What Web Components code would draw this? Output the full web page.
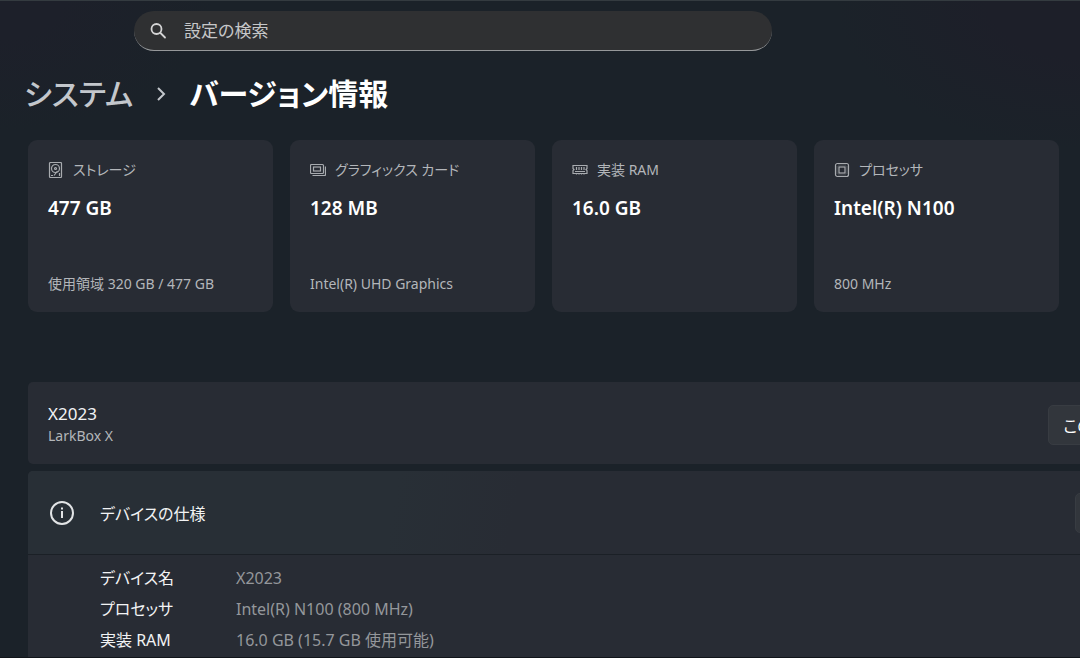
<!DOCTYPE html>
<html lang="ja">
<head>
<meta charset="utf-8">
<meta name="viewport" content="width=device-width, initial-scale=1">
<title>バージョン情報</title>
<style>
html, body {
  margin: 0;
  min-height: 100%;
}
body {
  --page: #1b2229;
  --surface: #282c34;
  --text: #f2f3f4;
  --text-soft: #b3b6ba;
  --text-dim: #94979b;
  background: var(--page);
  color: var(--text);
  font-family: "Noto Sans", "Noto Sans CJK JP", sans-serif;
  font-feature-settings: "palt";
}
</style>
</head>
<body>
<settings-window>
  <search-box slot="search" label="設定の検索"></search-box>
  <bread-crumb slot="title" parent="システム">バージョン情報</bread-crumb>
  <spec-card icon="disk">
    <span slot="label">ストレージ</span>
    477 GB
    <span slot="note">使用領域 320 GB / 477 GB</span>
  </spec-card>
  <spec-card icon="graphics">
    <span slot="label">グラフィックス カード</span>
    128 MB
    <span slot="note">Intel(R) UHD Graphics</span>
  </spec-card>
  <spec-card icon="memory">
    <span slot="label">実装 RAM</span>
    16.0 GB
  </spec-card>
  <spec-card icon="chip">
    <span slot="label">プロセッサ</span>
    Intel(R) N100
    <span slot="note">800 MHz</span>
  </spec-card>
  <device-panel slot="panels" model="LarkBox X">
    X2023
    <push-button slot="action">この PC の名前を変更</push-button>
  </device-panel>
  <detail-panel slot="panels">
    デバイスの仕様
    <push-button slot="action">コピー</push-button>
    <spec-row slot="rows" name="デバイス名">X2023</spec-row>
    <spec-row slot="rows" name="プロセッサ">Intel(R) N100 (800 MHz)</spec-row>
    <spec-row slot="rows" name="実装 RAM">16.0 GB (15.7 GB 使用可能)</spec-row>
  </detail-panel>
</settings-window>

<script>
(function () {
  const icons = {
    disk: `<rect x="1.5" y="0.5" width="12" height="15" rx="1"/>
      <circle cx="7.5" cy="6.5" r="4"/><circle cx="7.5" cy="6.5" r="1"/>
      <path d="M6 13.500 9.500 9M3 13.500h2M11.500 11v3"/>`,
    graphics: `<rect x="0.500" y="2.500" width="13" height="9" rx="1"/>
      <rect x="3.500" y="5" width="7" height="4"/>
      <path d="M2.500 13.500h12a1 1 0 0 0 1-1V4.500"/>`,
    memory: `<path d="M1 3.500h14v3l-1 1 1 1v3h-14v-3l1-1-1-1z"/>
      <path d="M4.500 5v3M7 5v3M9.500 5v3M12 5v3M3 9.500h10M4.500 11.500v1M7 11.500v1M9.500 11.500v1M12 11.500v1"/>`,
    chip: `<rect x="1.500" y="1.500" width="13" height="13" rx="2"/>
      <rect x="5" y="5" width="6" height="6"/>
      <path d="M4 3h8M4 13h8M3 4v8M13 4v8" stroke-opacity=".3"/>`
  };

  function define(name, html, setup) {
    const template = document.createElement("template");
    template.innerHTML = html;
    customElements.define(name, class extends HTMLElement {
      constructor() {
        super();
        this.attachShadow({mode: "open"});
        this.shadowRoot.appendChild(template.content.cloneNode(true));
      }

      connectedCallback() {
        if (setup)
          setup(this, this.shadowRoot);
      }
    });
  }

  define("settings-window", `
<style>
:host {
  display: block;
  box-sizing: border-box;
  min-height: 100vh;
  overflow: hidden;
  padding: 10px 21px 0 28px;
  border-top: 1px solid #343b40;
  border-bottom: 1px solid #11151a;
  background:
    radial-gradient(ellipse at 100% 0, #1d1f29 0 6%, transparent 16%),
    radial-gradient(ellipse at 0 0, #1d202a 0 4%, transparent 14%),
    var(--page);
}
header {
  padding-left: 106px;
}
.cards {
  display: grid;
  grid-template-columns: repeat(4, 1fr);
  gap: 17px;
  margin-top: 22px;
}
/* the lower panels run on past the right edge of the window */
.panels {
  display: flex;
  flex-direction: column;
  gap: 7px;
  margin: 70px -191px 0 0;
}
</style>
<header><slot name="search"></slot></header>
<main>
  <slot name="title"></slot>
  <section class="cards"><slot></slot></section>
  <section class="panels"><slot name="panels"></slot></section>
</main>`);

  define("search-box", `
<style>
:host {
  display: block;
  width: 69%;
}
label {
  display: flex;
  align-items: center;
  gap: 17px;
  box-sizing: border-box;
  height: 40px;
  padding: 0 16px;
  border-bottom: 1px solid #96989a;
  border-radius: 20px;
  background: #2f3032;
}
svg {
  flex: none;
  width: 17px;
  height: 17px;
  fill: none;
  stroke: #d4d4d5;
  stroke-width: 1.8;
  stroke-linecap: round;
}
input {
  flex: 1;
  min-width: 0;
  padding: 0;
  border: 0;
  outline: 0;
  background: none;
  color: inherit;
  font: inherit;
  font-size: 17px;
}
input::placeholder {
  color: #c6c7c8;
  opacity: 1;
}
</style>
<label>
  <svg viewBox="0 0 17 17" aria-hidden="true"><circle cx="6.500" cy="7" r="5"/><path d="m10.500 11 4.500 4.500"/></svg>
  <input type="search">
</label>`, function (host, root) {
    const input = root.querySelector("input");
    input.placeholder = host.getAttribute("label");
    input.setAttribute("aria-label", host.getAttribute("label"));
  });

  define("bread-crumb", `
<style>
:host {
  display: block;
  margin: 19px 0 0 -4px;
}
nav {
  display: flex;
  align-items: center;
  gap: 22px;
  font-size: 30px;
  line-height: 48px;
  white-space: nowrap;
}
a {
  color: #c3c7cc;
  font-weight: 500;
  text-decoration: none;
}
h1 {
  margin: 0;
  color: #fff;
  font-size: inherit;
  font-weight: 700;
}
svg {
  width: 12px;
  height: 16px;
  fill: none;
  stroke: #c3c7cc;
  stroke-width: 2;
}
</style>
<nav>
  <a href="#system"></a>
  <svg viewBox="0 0 12 16" aria-hidden="true"><path d="m3 2 6 6-6 6"/></svg>
  <h1><slot></slot></h1>
</nav>`, function (host, root) {
    root.querySelector("a").textContent = host.getAttribute("parent");
  });

  define("spec-card", `
<style>
:host {
  display: flex;
  flex-direction: column;
  box-sizing: border-box;
  min-height: 172px;
  padding: 18px 20px 16px;
  border-radius: 9px;
  background: var(--surface);
  color: var(--text-soft);
  font-size: 14px;
  line-height: 24px;
}
.label {
  display: flex;
  align-items: center;
  gap: 9px;
}
svg {
  width: 16px;
  height: 16px;
  fill: none;
  stroke: #a8abaf;
  stroke-width: 1.2;
}
.value {
  margin-top: 12px;
  color: #fff;
  font-size: 19px;
  font-weight: 600;
  line-height: 28px;
}
.note {
  margin-top: auto;
}
</style>
<div class="label"><svg viewBox="0 0 16 16" aria-hidden="true"></svg><slot name="label"></slot></div>
<div class="value"><slot></slot></div>
<div class="note"><slot name="note"></slot></div>`, function (host, root) {
    root.querySelector("svg").innerHTML = icons[host.getAttribute("icon")];
  });

  define("push-button", `
<style>
:host {
  display: block;
}
button {
  height: 40px;
  padding: 0 14px;
  border: 1px solid #383c42;
  border-radius: 5px;
  background: #32363c;
  color: #fff;
  font: inherit;
  font-size: 16px;
  white-space: nowrap;
}
</style>
<button type="button"><slot></slot></button>`);

  define("device-panel", `
<style>
:host {
  display: flex;
  align-items: center;
  justify-content: space-between;
  box-sizing: border-box;
  min-height: 82px;
  padding: 3px 20px 0;
  border-radius: 5px;
  background: var(--surface);
}
.name {
  font-size: 17px;
  line-height: 22px;
}
.model {
  color: var(--text-soft);
  font-size: 14px;
  line-height: 22px;
}
</style>
<div>
  <div class="name"><slot></slot></div>
  <div class="model"></div>
</div>
<slot name="action"></slot>`, function (host, root) {
    root.querySelector(".model").textContent = host.getAttribute("model");
  });

  define("detail-panel", `
<style>
:host {
  display: block;
  border-radius: 5px 5px 0 0;
  background: var(--surface);
}
header {
  display: flex;
  align-items: center;
  box-sizing: border-box;
  min-height: 84px;
  padding: 0 20px;
  border-bottom: 1px solid #1b2026;
  border-radius: 5px 5px 0 0;
  background: linear-gradient(100deg, #282f36 0 30%, transparent 40%);
}
svg {
  width: 28px;
  height: 28px;
  fill: none;
  stroke: #e2e4e6;
  stroke-width: 2;
}
h2 {
  flex: 1;
  margin: 0 0 0 24px;
  font-size: 16px;
  font-weight: 400;
}
.chevron {
  width: 16px;
  height: 16px;
  margin: 0 12px 0 51px;
}
.rows {
  padding: 8px 20px 1px 72px;
}
</style>
<header>
  <svg viewBox="0 0 28 28" aria-hidden="true"><circle cx="14" cy="14" r="11"/><path d="M14 12v7M14 8.500v2"/></svg>
  <h2><slot></slot></h2>
  <slot name="action"></slot>
  <svg class="chevron" viewBox="0 0 16 16" aria-hidden="true"><path d="m2 11 6-6 6 6"/></svg>
</header>
<div class="rows"><slot name="rows"></slot></div>`);

  define("spec-row", `
<style>
:host {
  display: block;
  font-size: 16px;
  line-height: 31px;
}
dl {
  display: grid;
  grid-template-columns: 136px 1fr;
  margin: 0;
}
dd {
  margin: 0;
  color: var(--text-dim);
}
</style>
<dl><dt></dt><dd><slot></slot></dd></dl>`, function (host, root) {
    root.querySelector("dt").textContent = host.getAttribute("name");
  });
})();
</script>
</body>
</html>
